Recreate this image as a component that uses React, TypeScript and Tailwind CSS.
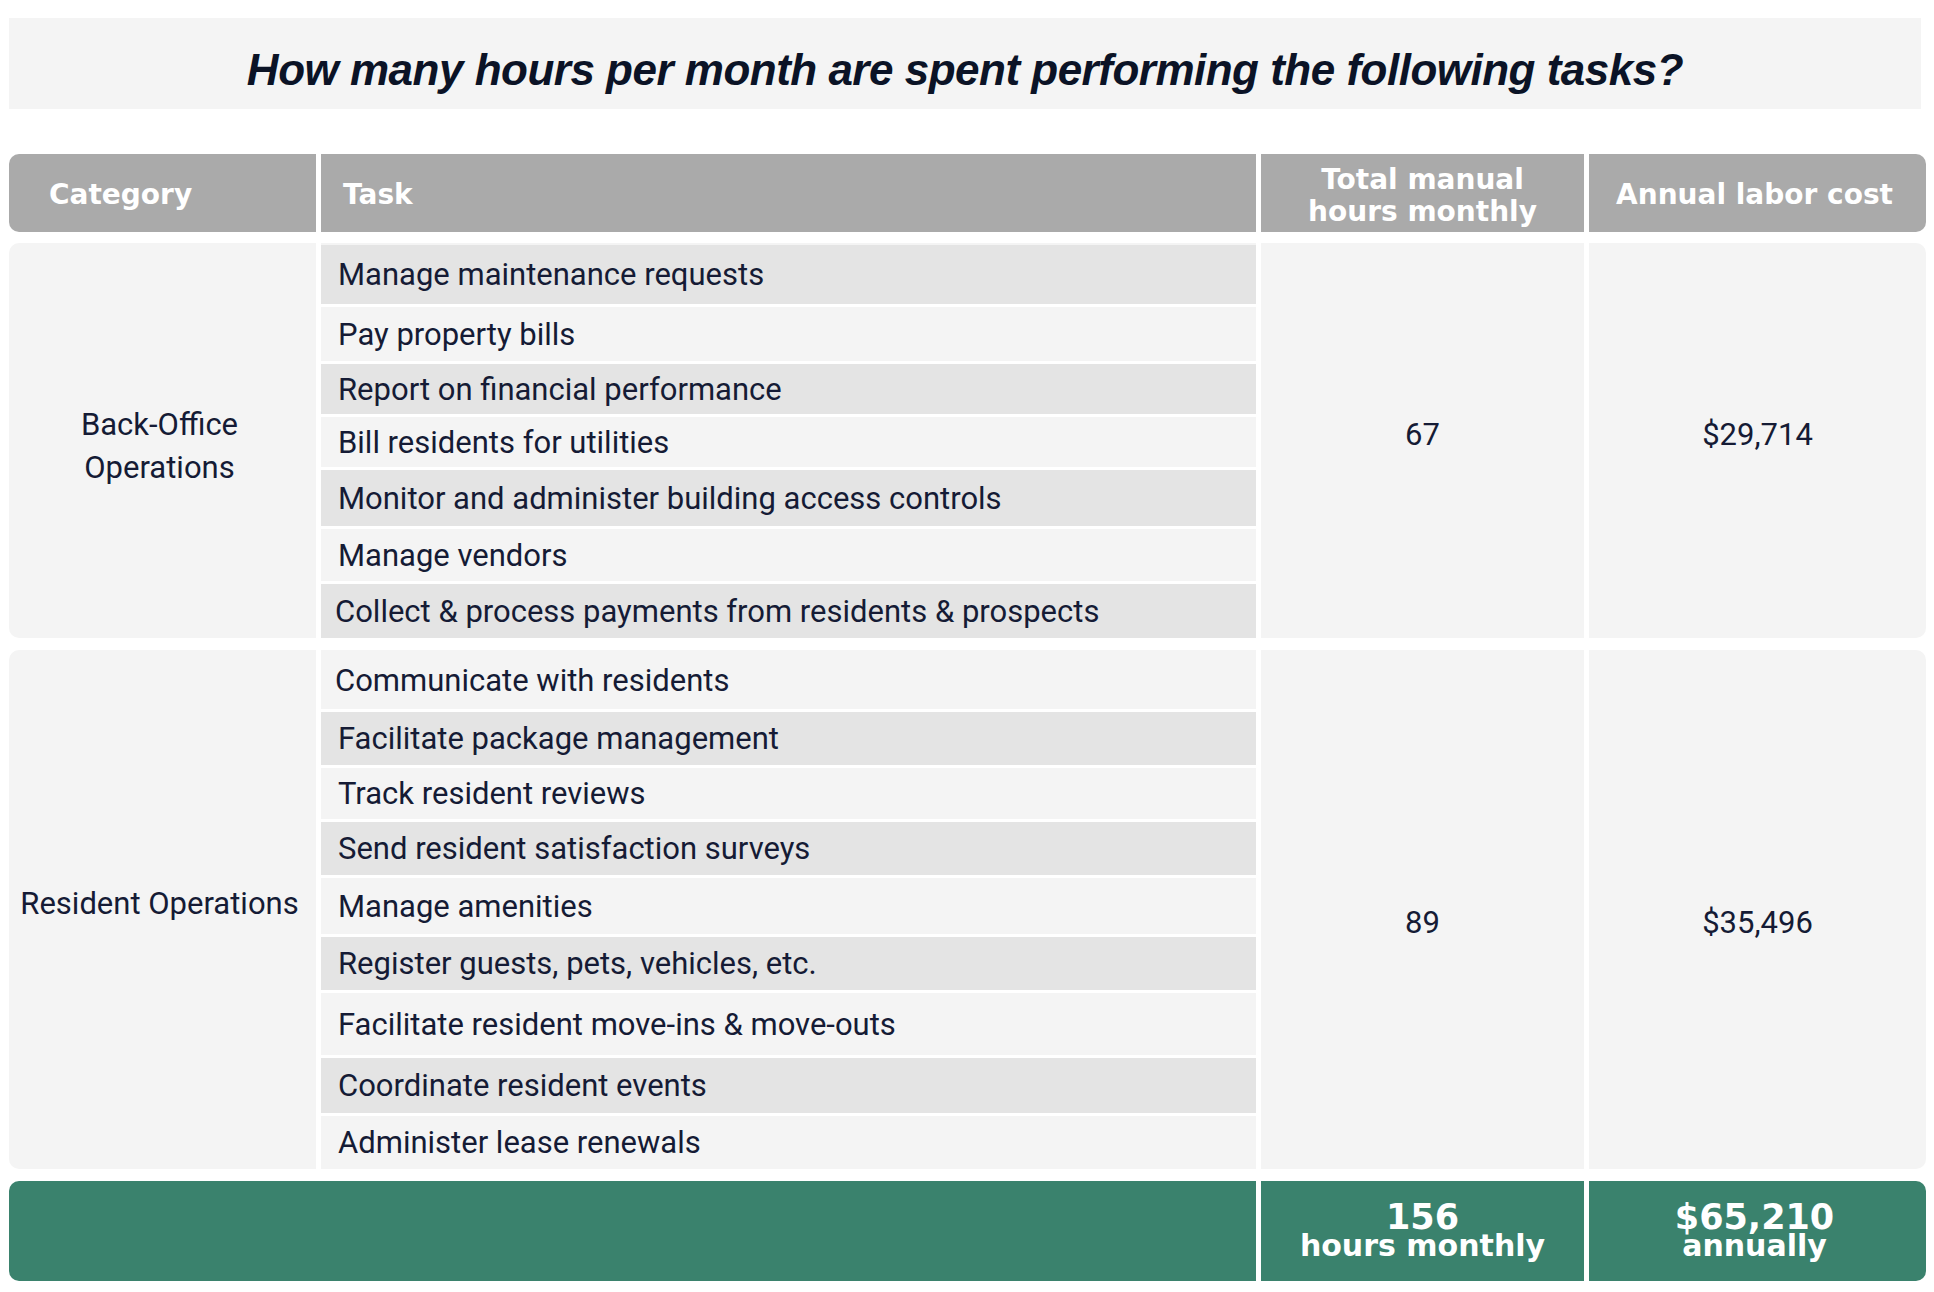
import clsx from "clsx";

type Row = {
  task: string;
  h: string;
  dark?: boolean;
  pl?: string;
};

const BACK_OFFICE: Row[] = [
  { task: "Manage maintenance requests", h: "h-[59px]", dark: true },
  { task: "Pay property bills", h: "h-[54px]" },
  { task: "Report on financial performance", h: "h-[50px]", dark: true },
  { task: "Bill residents for utilities", h: "h-[50px]" },
  { task: "Monitor and administer building access controls", h: "h-[56px]", dark: true },
  { task: "Manage vendors", h: "h-[52px]" },
  {
    task: "Collect & process payments from residents & prospects",
    h: "h-[54px]",
    dark: true,
    pl: "pl-[14px]",
  },
];

const RESIDENT: Row[] = [
  { task: "Communicate with residents", h: "h-[57px]", pl: "pl-[14px]" },
  { task: "Facilitate package management", h: "h-[53px]", dark: true },
  { task: "Track resident reviews", h: "h-[51px]" },
  { task: "Send resident satisfaction surveys", h: "h-[53px]", dark: true },
  { task: "Manage amenities", h: "h-[56px]" },
  { task: "Register guests, pets, vehicles, etc.", h: "h-[53px]", dark: true },
  { task: "Facilitate resident move-ins & move-outs", h: "h-[62px]" },
  { task: "Coordinate resident events", h: "h-[55px]", dark: true },
  { task: "Administer lease renewals", h: "h-[53px]" },
];

const cols = "grid grid-cols-[307px_935px_323px_337px] gap-x-[5px]";
const bodyFont = "font-['Roboto',sans-serif] text-[31px] text-[#151b35]";
const headFont = "font-['DejaVu_Sans',sans-serif] font-bold text-white";

interface SectionProps {
  category: React.ReactNode;
  rows: Row[];
  hours: string;
  cost: string;
  catShift: string;
  numShift: string;
}

function Section({ category, rows, hours, cost, catShift, numShift }: SectionProps) {
  return (
    <div className={clsx(cols, bodyFont)}>
      <div
        className={clsx(
          "flex items-center justify-center rounded-l-[10px] bg-[#f4f4f4] text-center leading-[43px]",
          catShift
        )}
      >
        {category}
      </div>
      <div className="flex flex-col gap-[3px] border-t-[2px] border-[#f4f4f4] bg-white">
        {rows.map((row) => (
          <div
            key={row.task}
            className={clsx(
              "flex items-center leading-none",
              row.h,
              row.pl ?? "pl-[17px]",
              row.dark ? "bg-[#e4e4e4]" : "bg-[#f4f4f4]"
            )}
          >
            {row.task}
          </div>
        ))}
      </div>
      <div className={clsx("flex items-center justify-center bg-[#f4f4f4]", numShift)}>
        {hours}
      </div>
      <div
        className={clsx(
          "flex items-center justify-center rounded-r-[10px] bg-[#f4f4f4]",
          numShift
        )}
      >
        {cost}
      </div>
    </div>
  );
}

export default function App() {
  return (
    <div className="min-h-screen bg-white pl-[9px] pt-[18px]">
      <div className="flex h-[91px] w-[1912px] justify-center bg-[#f4f4f4] pt-[30px]">
        <h1 className="font-['Liberation_Sans',Arial,sans-serif] text-[44px] font-bold italic leading-[44px] tracking-[-0.5px] text-[#0b1326]">
          How many hours per month are spent performing the following tasks?
        </h1>
      </div>

      <div className="mt-[45px] w-[1917px]">
        {/* header */}
        <div className={clsx(cols, headFont, "h-[78px] text-[28px]")}>
          <div className="flex items-center rounded-l-[10px] bg-[#aaaaaa] pl-[40px] pt-[4px]">
            Category
          </div>
          <div className="flex items-center bg-[#aaaaaa] pl-[22px] pt-[4px]">Task</div>
          <div className="flex items-center justify-center bg-[#aaaaaa] pt-[5px] text-center leading-[32px]">
            Total manual
            <br />
            hours monthly
          </div>
          <div className="flex items-center justify-center rounded-r-[10px] bg-[#aaaaaa] pr-[6px] pt-[4px]">
            Annual labor cost
          </div>
        </div>

        <div className="mt-[11px]">
          <Section
            category={
              <span>
                Back-Office
                <br />
                Operations
              </span>
            }
            rows={BACK_OFFICE}
            hours="67"
            cost="$29,714"
            catShift="pt-[10px] pr-[6px]"
            numShift="pb-[10px]"
          />
        </div>

        <div className="mt-[12px]">
          <Section
            category="Resident Operations"
            rows={RESIDENT}
            hours="89"
            cost="$35,496"
            catShift="pb-[12px] pr-[6px]"
            numShift="pt-[28px]"
          />
        </div>

        {/* totals */}
        <div className={clsx(cols, headFont, "mt-[12px] h-[100px]")}>
          <div className="col-span-2 rounded-l-[10px] bg-[#3a826d]" />
          <div className="flex flex-col items-center justify-center bg-[#3a826d]">
            <span className="text-[35px] leading-[30px]">156</span>
            <span className="text-[30px] leading-[28px]">hours monthly</span>
          </div>
          <div className="flex flex-col items-center justify-center rounded-r-[10px] bg-[#3a826d] pr-[6px]">
            <span className="text-[35px] leading-[30px]">$65,210</span>
            <span className="text-[30px] leading-[28px]">annually</span>
          </div>
        </div>
      </div>
    </div>
  );
}
